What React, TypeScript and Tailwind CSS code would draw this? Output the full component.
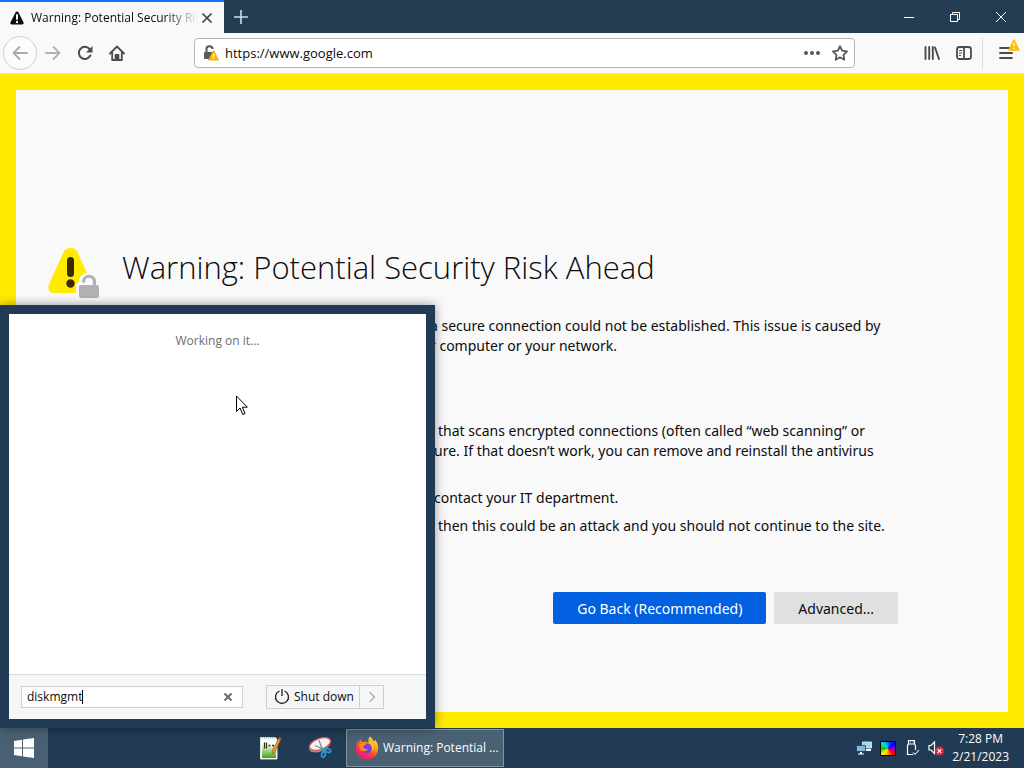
import React from 'react';

const App = () => {
  return (
    <div className="relative flex min-h-screen flex-col overflow-hidden bg-[#f9f9fa] font-['Open_Sans','Noto_Sans',sans-serif] text-[#0c0c0d]">
      <TitleBar />
      <NavBar />
      <WarningPage />
      <Taskbar />
      <StartMenu />
      <MousePointer />
    </div>
  );
};

const TitleBar = () => (
  <header className="flex h-[33px] shrink-0 bg-[#253d52] text-white">
    <div className="flex w-56 items-center border-t-2 border-[#0a74ff] bg-[#f9f9fa] px-2 text-[#0c0c0d]">
      <svg className="h-4 w-[18px] shrink-0" viewBox="0 0 18 16">
        <path d="M9 1.500c.7 0 1.200.4 1.500 1l5 9.800c.6 1.300-.1 2.200-1.400 2.200H3.900c-1.300 0-2-.9-1.400-2.200l5-9.800c.3-.6.8-1 1.500-1z" fill="#0c0c0d" />
        <path d="M9 5v4" stroke="#f9f9fa" strokeWidth="2" strokeLinecap="round" />
        <circle cx="9" cy="12" r="1.200" fill="#f9f9fa" />
      </svg>
      <span className="ml-[5px] flex-1 overflow-hidden text-[12px] whitespace-nowrap [mask-image:linear-gradient(to_right,black_80%,transparent)]">
        Warning: Potential Security Risk
      </span>
      <button aria-label="Close tab" className="flex h-5 w-[18px] items-center justify-center">
        <svg className="h-3 w-3" viewBox="0 0 12 12" stroke="#3b3b3d" strokeWidth="1.600">
          <path d="M1.500 1.500l9 9M10.500 1.500l-9 9" />
        </svg>
      </button>
    </div>
    <button aria-label="New tab" className="flex w-[34px] items-center justify-center">
      <svg className="h-4 w-4" viewBox="0 0 16 16" stroke="#d5dce2" strokeWidth="1.600">
        <path d="M8 1v14M1 8h14" />
      </svg>
    </button>
    <div className="ml-auto flex">
      <button aria-label="Minimize" className="flex w-[46px] items-center justify-center">
        <svg className="h-[10px] w-[10px]" viewBox="0 0 10 10" stroke="white">
          <path d="M0 5.500h10" />
        </svg>
      </button>
      <button aria-label="Restore" className="flex w-[46px] items-center justify-center">
        <svg className="h-[10px] w-[10px]" viewBox="0 0 10 10" fill="none" stroke="white">
          <path d="M.5 2.500h7v7h-7zM2.500 2.500v-2h7v7h-2" />
        </svg>
      </button>
      <button aria-label="Close" className="flex w-[46px] items-center justify-center">
        <svg className="h-[10px] w-[10px]" viewBox="0 0 10 10" stroke="white">
          <path d="M0 0l10 10M10 0L0 10" />
        </svg>
      </button>
    </div>
  </header>
);

const NavBar = () => (
  <nav className="flex h-[41px] shrink-0 items-center border-b border-[#e3e1c8] bg-[#f9f9fa] pl-[3px]">
    <button aria-label="Back" className="flex h-[34px] w-[34px] items-center justify-center rounded-full border border-[#cfcfcf] bg-[#fcfcfc]">
      <svg className="h-4 w-4" viewBox="0 0 16 16" fill="none" stroke="#a9a9aa" strokeWidth="1.800" strokeLinecap="round" strokeLinejoin="round">
        <path d="M15 8H1.500M7.500 2L1.500 8l6 6" />
      </svg>
    </button>
    <button aria-label="Forward" className="flex h-8 w-8 items-center justify-center">
      <svg className="h-4 w-4" viewBox="0 0 16 16" fill="none" stroke="#b1b1b2" strokeWidth="1.800" strokeLinecap="round" strokeLinejoin="round">
        <path d="M1 8h13.500M8.500 2l6 6-6 6" />
      </svg>
    </button>
    <button aria-label="Reload" className="flex h-8 w-8 items-center justify-center">
      <svg className="h-4 w-4" viewBox="0 0 16 16">
        <path d="M13.300 10.500A6 6 0 1 1 12.500 4" fill="none" stroke="#4b4b4d" strokeWidth="2" strokeLinecap="round" />
        <path d="M15.500 1v6.500H9z" fill="#4b4b4d" />
      </svg>
    </button>
    <button aria-label="Home" className="flex h-8 w-8 items-center justify-center">
      <svg className="h-4 w-4" viewBox="0 0 16 16" fill="none" stroke="#4b4b4d" strokeWidth="1.800" strokeLinecap="round" strokeLinejoin="round">
        <path d="M1 8.500l7-7 7 7M3.200 8v7h9.600V8" />
        <path d="M6.600 14.500V10h2.800v4.500z" fill="#4b4b4d" />
      </svg>
    </button>
    <div className="mr-[61px] ml-[61px] flex h-[30px] flex-1 items-center rounded-sm border border-[#b5b5b8] bg-white px-2">
      <svg className="h-4 w-4 shrink-0" viewBox="0 0 16 16">
        <path d="M3.500 8V4.500a3 3 0 0 1 6-.5" fill="none" stroke="#58585a" strokeWidth="2" />
        <rect x="1" y="7" width="9" height="7" rx="1" fill="#58585a" />
        <path d="M10.500 5.500l5 9.500h-10z" fill="#ffbf00" stroke="#e8a200" strokeWidth=".8" strokeLinejoin="round" />
        <path d="M10.500 9v3M10.500 13v1" stroke="white" strokeWidth="1.200" />
      </svg>
      <input aria-label="Address" type="text" defaultValue="https://www.google.com" className="ml-[6px] min-w-0 flex-1 pt-[2px] text-[13px] outline-none" />
      <button aria-label="Page actions" className="mr-3">
        <svg className="h-4 w-4" viewBox="0 0 16 16" fill="#58585a">
          <circle cx="2" cy="8" r="2" />
          <circle cx="8" cy="8" r="2" />
          <circle cx="14" cy="8" r="2" />
        </svg>
      </button>
      <button aria-label="Bookmark this page" className="-mr-2 pr-[6px]">
        <svg className="h-4 w-4" viewBox="0 0 16 16" fill="none" stroke="#58585a" strokeWidth="1.800" strokeLinejoin="round">
          <path d="M8 1.200l2.100 4.500 4.900.7-3.500 3.400.8 4.900L8 12.300l-4.300 2.400.8-4.900L1 6.400l4.900-.7z" />
        </svg>
      </button>
    </div>
    <button aria-label="Library" className="flex h-8 w-8 items-center justify-center">
      <svg className="h-4 w-4" viewBox="0 0 16 16" stroke="#4b4b4d" strokeWidth="1.900" strokeLinecap="round">
        <path d="M1.500 2v12M5.200 2v12M8.800 2v12M11 2.500l4 11.500" />
      </svg>
    </button>
    <button aria-label="Sidebars" className="flex h-8 w-8 items-center justify-center">
      <svg className="h-4 w-4" viewBox="0 0 16 16" fill="none" stroke="#4b4b4d" strokeWidth="1.800">
        <rect x="1" y="2" width="14" height="12" rx="2.500" />
        <path d="M8 2v12" />
        <path d="M3 5.500h3M3 8h3M3 10.500h2" strokeWidth="1" />
      </svg>
    </button>
    <button aria-label="Open menu" className="relative ml-[2px] flex h-8 w-[42px] items-center border-l border-[#dedee0] pl-4">
      <svg className="h-4 w-[14px]" viewBox="0 0 14 16" stroke="#4b4b4d" strokeWidth="1.800" strokeLinecap="round">
        <path d="M1 3h10M1 8h12M1 13h12" />
      </svg>
      <svg className="absolute top-[2px] right-1 h-3 w-3" viewBox="0 0 12 12">
        <path d="M6 1l5 10H1z" fill="#ffbf00" stroke="#ffbf00" strokeWidth="1.500" strokeLinejoin="round" />
        <path d="M6 3.500v4M6 9v1" stroke="white" strokeWidth="1.200" />
      </svg>
    </button>
  </nav>
);

const WarningPage = () => (
  <main className="flex-1 border-16 border-[#ffea00] bg-[#f9f9fa] px-8 pt-[154px] pb-[88px]">
    <div className="mx-auto w-full max-w-[780px]">
      <div className="-ml-[74px] flex items-start">
        <svg className="mt-1 mr-[22px] h-[52px] w-[52px] shrink-0" viewBox="0 0 52 52">
          <path d="M22.500 0c3.200 0 5.600 1.400 7 4.200l14.500 32c2 4.800-.5 8.800-5.500 8.800h-32C1.500 45-1 41 1 36.200l14.500-32C16.900 1.400 19.300 0 22.500 0z" fill="#ffea00" />
          <path d="M22.500 12.500v13" stroke="#3e2800" strokeWidth="7" strokeLinecap="round" />
          <circle cx="22.500" cy="35.500" r="4.200" fill="#3e2800" />
          <path d="M28 52V38q0-3 3-4c0-6 4-9 9-9s9 3 10 8l2 4v15z" fill="#f9f9fa" />
          <path d="M35.500 34.500v-.5a5.500 5.500 0 0 1 11-.5V38" fill="none" stroke="#b1b1b3" strokeWidth="3.200" />
          <rect x="31" y="37" width="20" height="13" rx="2" fill="#b1b1b3" />
        </svg>
        <h1 className="text-[31px] leading-[46px] font-light whitespace-nowrap">Warning: Potential Security Risk Ahead</h1>
      </div>
      <div className="mt-4 ml-[312px] font-['Noto_Sans','Open_Sans',sans-serif] text-[14px] leading-5 whitespace-nowrap">
        <p className="-ml-1">
          a secure connection could not be established. This issue is caused by
          <br />r computer or your network.
        </p>
        <ul className="mt-[65px] space-y-[8px]">
          <li className="min-h-[59px]">
            <span className="pl-1">that scans encrypted connections (often called “web scanning” or</span>
            <br />
            ure. If that doesn’t work, you can remove and reinstall the antivirus
          </li>
          <li>contact your IT department.</li>
          <li className="pl-1">then this could be an attack and you should not continue to the site.</li>
        </ul>
      </div>
      <div className="mt-14 mr-1 flex justify-end gap-2 font-['Noto_Sans','Open_Sans',sans-serif] text-[14px]">
        <button className="h-8 rounded-xs bg-[#0060df] px-6 text-white">Go Back (Recommended)</button>
        <button className="h-8 rounded-xs bg-[#e0e0e1] px-6">Advanced...</button>
      </div>
    </div>
  </main>
);

const StartMenu = () => (
  <section className="absolute bottom-10 left-0 flex h-[423px] w-[435px] flex-col border-9 border-[#203b53] bg-white shadow-[0_0_10px_rgba(0,0,0,0.4)]">
    <p className="mt-4 flex-1 text-center text-[12px] leading-[22px] text-[#6d6d6d]">Working on it...</p>
    <div className="flex h-[45px] items-center border-t border-[#d9dadb] bg-[#f5f6f7] px-3 text-[12px]">
      <label className="relative flex h-[22px] w-[222px] items-center border border-[#cdcfd0] bg-white">
        <input aria-label="Search programs and files" type="text" defaultValue="diskmgmt" className="w-full min-w-0 pl-[5px] outline-none" />
        <span className="absolute top-[3px] left-[60px] h-[14px] w-px bg-black" />
        <button aria-label="Clear search" className="mr-[10px] shrink-0">
          <svg className="h-2 w-2" viewBox="0 0 8 8" stroke="#6c6c6c" strokeWidth="2">
            <path d="M.5 .5l7 7M7.500 .5l-7 7" />
          </svg>
        </button>
      </label>
      <div className="ml-[23px] flex h-6 border border-[#cdcfd0]">
        <button className="flex w-[93px] items-center gap-1 border-r border-[#cdcfd0] pl-[7px] whitespace-nowrap">
          <svg className="h-4 w-4 shrink-0" viewBox="0 0 16 16" fill="none" stroke="#222222" strokeWidth="1.300">
            <path d="M5.500 2A6.500 6.500 0 1 0 10.500 2M8 0v7" />
          </svg>
          Shut down
        </button>
        <button aria-label="Shut down options" className="flex w-[23px] items-center justify-center">
          <svg className="h-[10px] w-2" viewBox="0 0 8 10" fill="none" stroke="#a5a5a5" strokeWidth="1.200">
            <path d="M1.500 0l5 5-5 5" />
          </svg>
        </button>
      </div>
    </div>
  </section>
);

const Taskbar = () => (
  <footer className="flex h-10 shrink-0 items-center bg-[#203b53] text-[12px] text-white">
    <button aria-label="Start" className="flex h-10 w-12 items-center justify-center bg-[#496074]">
      <svg className="h-5 w-5" viewBox="0 0 20 20" fill="white">
        <path d="M0 3l8-1.200v7.700H0zM9 1.600L20 0v9.500H9zM0 10.500h8v7.700L0 17zM9 10.500h11V20L9 18.400z" />
      </svg>
    </button>
    <button aria-label="Notepad++" className="ml-[210px] flex h-10 w-6 items-center justify-center">
      <NotepadIcon />
    </button>
    <button aria-label="Snipping Tool" className="ml-[26px] flex h-10 w-6 items-center justify-center">
      <SnippingIcon />
    </button>
    <button className="ml-[14px] flex h-[38px] w-[158px] items-center gap-1 border border-[#8292a0] bg-[#4a6073] pl-2 whitespace-nowrap">
      <FirefoxIcon />
      Warning: Potential ...
    </button>
    <div className="mr-[15px] ml-auto flex items-center">
      <svg className="mr-2 h-4 w-4" viewBox="0 0 16 16">
        <path d="M6.500 2h9v6h-9z" fill="#a6d4e8" stroke="#e5f4fa" strokeWidth=".8" />
        <path d="M10 9h5v2h-5z" fill="white" />
        <path d="M.5 5.500h9v6h-9z" fill="#7ebcd9" stroke="#203b53" strokeWidth=".8" />
        <path d="M4 12h2v1.500h2v1H2v-1h2z" fill="white" />
      </svg>
      <span className="mr-2 flex h-[15px] w-4 border border-black bg-[conic-gradient(from_45deg,#0000ff,#8b00d8,#ff0000,#ffa000,#fff000,#00c800,#00e0e0,#0080ff,#0000ff)]" />
      <svg className="mr-2 h-[18px] w-4" viewBox="0 0 16 18" fill="none" stroke="white" strokeWidth="1.200">
        <path d="M4.500 5V1.500h6V5M9 15.500H3.500V7q0-2 2-2h4q2 0 2 2v4M6 3h1M8.500 3h1" />
        <path d="M9 13.500l2 2 4-4.500" stroke="#b9c6d1" />
      </svg>
      <svg className="mr-2 h-4 w-4" viewBox="0 0 16 16">
        <path d="M1 5.500h2L6.500 2v11.500L3 10H1z" fill="none" stroke="white" strokeWidth="1.200" />
        <circle cx="11.500" cy="11" r="4.500" fill="#dc2840" />
        <path d="M9.700 9.200l3.600 3.600M13.300 9.200l-3.600 3.600" stroke="white" strokeWidth="1.200" />
      </svg>
      <div className="text-center text-[12px] leading-[18px]">
        <div>7:28 PM</div>
        <div>2/21/2023</div>
      </div>
    </div>
  </footer>
);

const NotepadIcon = () => (
  <svg className="h-6 w-6" viewBox="0 0 24 24">
    <defs>
      <linearGradient id="grass" x1="0" y1="0" x2="0" y2="1">
        <stop offset="0" stopColor="#e9f5c8" />
        <stop offset="1" stopColor="#39a51c" />
      </linearGradient>
    </defs>
    <path d="M2.500 1.500h15l1.500 2v19.500h-16.500z" fill="white" stroke="#dce6d9" />
    <path d="M4 10h14v12H4z" fill="url(#grass)" />
    <path d="M4 2h13" stroke="#8a9a8a" strokeDasharray="1 1" />
    <path d="M6.500 6.500v6M8.500 6.500v6M10.500 9.500h2M14 9.500h2" stroke="#26361f" strokeWidth="1.300" />
    <path d="M21 2l2 1-6 13-3 2 .5-4z" fill="#e49b32" stroke="#8a5824" strokeWidth=".6" />
    <path d="M20.500 3l2 1L23 2l-2-1z" fill="#c9493a" />
  </svg>
);

const SnippingIcon = () => (
  <svg className="h-6 w-6" viewBox="0 0 24 24">
    <ellipse cx="11.500" cy="10" rx="11" ry="5.500" transform="rotate(-20 11.500 10)" fill="#8d989f" />
    <ellipse cx="12" cy="8" rx="11" ry="5.500" transform="rotate(-20 12 8)" fill="#f5f4f4" stroke="#d9534f" strokeWidth="1.200" />
    <path d="M7 9.500l9 4M11 4l3 9" stroke="#7d858b" strokeWidth="1.200" />
    <g fill="none" stroke="#299bd0" strokeWidth="1.800">
      <ellipse cx="20" cy="14.500" rx="2.800" ry="1.700" transform="rotate(25 20 14.500)" />
      <ellipse cx="15.500" cy="18.500" rx="1.800" ry="2.800" transform="rotate(15 15.500 18.500)" />
      <path d="M14 12l3.500 2M15 12.500l1 3.500" />
    </g>
  </svg>
);

const FirefoxIcon = () => (
  <svg className="h-6 w-6 shrink-0" viewBox="0 0 24 24">
    <defs>
      <linearGradient id="flame" x1=".85" y1="0" x2=".2" y2="1">
        <stop offset="0" stopColor="#fff44f" />
        <stop offset=".35" stopColor="#ff980e" />
        <stop offset=".65" stopColor="#ff3647" />
        <stop offset="1" stopColor="#e31587" />
      </linearGradient>
    </defs>
    <path d="M15 .5c2 1.500 3 3.300 3.600 4.800 1-.2 1.400-1 1.400-1.500 2 2.200 3.500 5.200 3.200 9C22.800 19 18 23.500 12 23.500 5.500 23.500.8 18.800.8 12.500c0-3 .7-5.300 2.200-7.300l.5 2L5.200 3l1.600 3 2.700-.3c1.500-.3 3.500.5 4 1.500C13 4.500 13.500 2 15 .5z" fill="url(#flame)" />
    <circle cx="12" cy="12.500" r="5" fill="#7542d9" />
    <path d="M4 9c2-2.500 5-2.500 7-1.200 0 1.300-2.500 1.500-2.700 2.700-.2 2 2.200 3.300 4.700 2-1 3-6 4-8.200.8z" fill="#ff8b16" />
    <path d="M13.500 7c3.500 1.500 4.500 5.500 2.500 8.500 2.500-1 3.500-4 2.800-7L15.500 4z" fill="#ffbd2e" />
  </svg>
);

const MousePointer = () => (
  <svg className="pointer-events-none absolute top-[395px] left-[236px] h-[21px] w-3" viewBox="0 0 12 21">
    <path d="M.5 1v15.500L4 13l2.800 6.500 2.200-1-2.700-6.300h5z" fill="white" stroke="black" />
  </svg>
);

export default App;
